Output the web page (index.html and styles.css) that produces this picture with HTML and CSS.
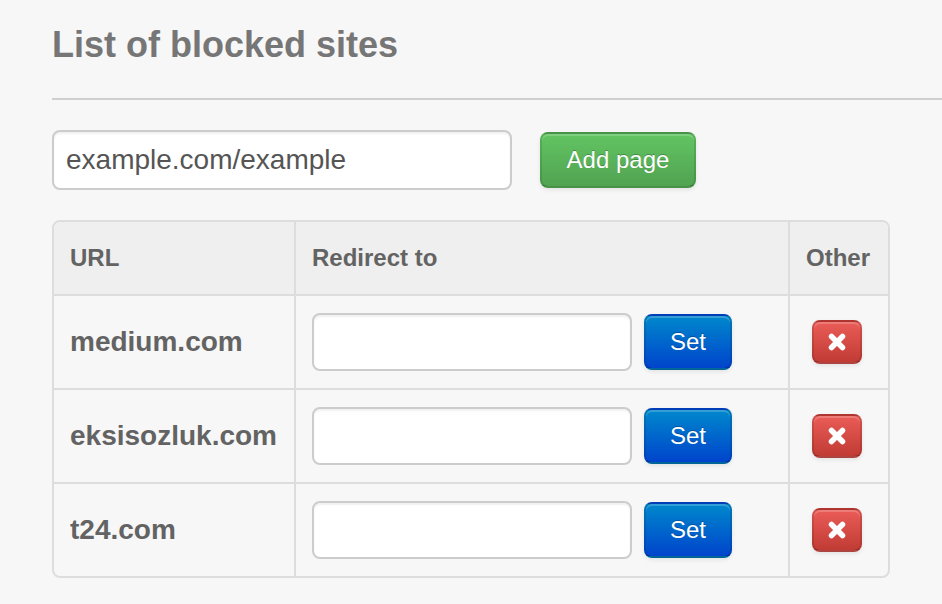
FILE: index.html
```html
<!DOCTYPE html>
<html>
<head>
<meta charset="utf-8">
<title>List of blocked sites</title>
<link rel="stylesheet" href="styles.css">
</head>
<body>
<main class="page">
  <h4 class="title">List of blocked sites</h4>
  <hr class="rule">
  <form class="add-row">
    <input class="field field-add" type="text" value="example.com/example">
    <button type="button" class="btn btn-success btn-add">Add page</button>
  </form>
  <table class="sites">
    <colgroup>
      <col class="c-url">
      <col class="c-redirect">
      <col class="c-other">
    </colgroup>
    <thead>
      <tr>
        <th>URL</th>
        <th>Redirect to</th>
        <th>Other</th>
      </tr>
    </thead>
    <tbody>
      <tr>
        <td class="site">medium.com</td>
        <td><div class="redirect"><input class="field field-redirect" type="text"><button type="button" class="btn btn-primary btn-set">Set</button></div></td>
        <td class="other"><button type="button" class="btn btn-danger btn-remove" aria-label="Remove"><svg viewBox="0 0 20 20" width="20" height="20"><path d="M4.5 4.5 L15.5 15.5 M15.5 4.5 L4.5 15.5" /></svg></button></td>
      </tr>
      <tr>
        <td class="site">eksisozluk.com</td>
        <td><div class="redirect"><input class="field field-redirect" type="text"><button type="button" class="btn btn-primary btn-set">Set</button></div></td>
        <td class="other"><button type="button" class="btn btn-danger btn-remove" aria-label="Remove"><svg viewBox="0 0 20 20" width="20" height="20"><path d="M4.5 4.5 L15.5 15.5 M15.5 4.5 L4.5 15.5" /></svg></button></td>
      </tr>
      <tr>
        <td class="site">t24.com</td>
        <td><div class="redirect"><input class="field field-redirect" type="text"><button type="button" class="btn btn-primary btn-set">Set</button></div></td>
        <td class="other"><button type="button" class="btn btn-danger btn-remove" aria-label="Remove"><svg viewBox="0 0 20 20" width="20" height="20"><path d="M4.5 4.5 L15.5 15.5 M15.5 4.5 L4.5 15.5" /></svg></button></td>
      </tr>
    </tbody>
  </table>
</main>
</body>
</html>
```
FILE: styles.css
```css
html, body {
  margin: 0;
  padding: 0;
  background: #f7f7f7;
}

body {
  font-family: "Liberation Sans", Arial, Helvetica, sans-serif;
  color: #636363;
}

.page {
  padding: 25px 0 0 52px;
}

.title {
  margin: 0;
  font-size: 36px;
  line-height: 40px;
  font-weight: bold;
  color: #767676;
}

.rule {
  margin: 33px 0 0 0;
  border: 0;
  height: 2px;
  background: #cfcfcf;
}

.add-row {
  margin: 30px 0 0 0;
  display: flex;
  align-items: center;
  gap: 28px;
  height: 60px;
}

.field {
  box-sizing: border-box;
  background: #fff;
  border: 2px solid #cccccc;
  border-radius: 8px;
  box-shadow: inset 0 2px 2px rgba(0, 0, 0, 0.06);
  font-family: "Liberation Sans", Arial, Helvetica, sans-serif;
  font-size: 28px;
  color: #555;
  padding: 0 12px;
  outline: none;
  margin: 0;
}

.field-add {
  width: 460px;
  height: 60px;
}

.btn {
  box-sizing: border-box;
  font-family: "Liberation Sans", Arial, Helvetica, sans-serif;
  font-size: 24px;
  color: #fff;
  border-radius: 8px;
  border: 2px solid rgba(0, 0, 0, 0.1);
  border-bottom-color: rgba(0, 0, 0, 0.25);
  text-shadow: 0 -1px 0 rgba(0, 0, 0, 0.25);
  box-shadow: inset 0 2px 0 rgba(255, 255, 255, 0.2), 0 2px 4px rgba(0, 0, 0, 0.08);
  padding: 0;
  margin: 0;
  cursor: pointer;
  display: inline-flex;
  align-items: center;
  justify-content: center;
}

.btn-success {
  background: linear-gradient(to bottom, #62c462, #51a351);
}

.btn-primary {
  background: linear-gradient(to bottom, #0088cc, #0044cc);
}

.btn-danger {
  background: linear-gradient(to bottom, #ea5c57, #c13b35);
}

.btn-add {
  width: 156px;
  height: 56px;
}

.sites {
  margin-top: 30px;
  width: 838px;
  table-layout: fixed;
  border-collapse: separate;
  border-spacing: 0;
  border: 2px solid #dddddd;
  border-radius: 8px;
  background: #f7f7f7;
}

.c-url { width: 240px; }
.c-redirect { width: 494px; }
.c-other { width: 100px; }

.sites th,
.sites td {
  box-sizing: border-box;
  padding: 0 16px;
  border-left: 2px solid #dddddd;
  border-top: 2px solid #dddddd;
  text-align: left;
  vertical-align: middle;
}

.sites th:first-child,
.sites td:first-child {
  border-left: 0;
}

.sites th {
  border-top: 0;
  height: 72px;
  font-size: 24px;
  font-weight: bold;
  color: #636363;
  background: #efefef;
}

.sites th:first-child {
  border-top-left-radius: 6px;
}

.sites th:last-child {
  border-top-right-radius: 6px;
}

.sites td {
  height: 94px;
}

.site {
  font-size: 28px;
  font-weight: bold;
  color: #636363;
}

.redirect {
  display: flex;
  align-items: center;
  gap: 12px;
}

.field-redirect {
  width: 320px;
  height: 58px;
}

.btn-set {
  width: 88px;
  height: 56px;
}

.sites td.other {
  padding: 0 20px 0 22px;
}

.btn-remove {
  width: 50px;
  height: 44px;
}

.btn-remove svg {
  display: block;
}

.btn-remove path {
  fill: none;
  stroke: #fff;
  stroke-width: 5.5;
  stroke-linecap: round;
}
```
